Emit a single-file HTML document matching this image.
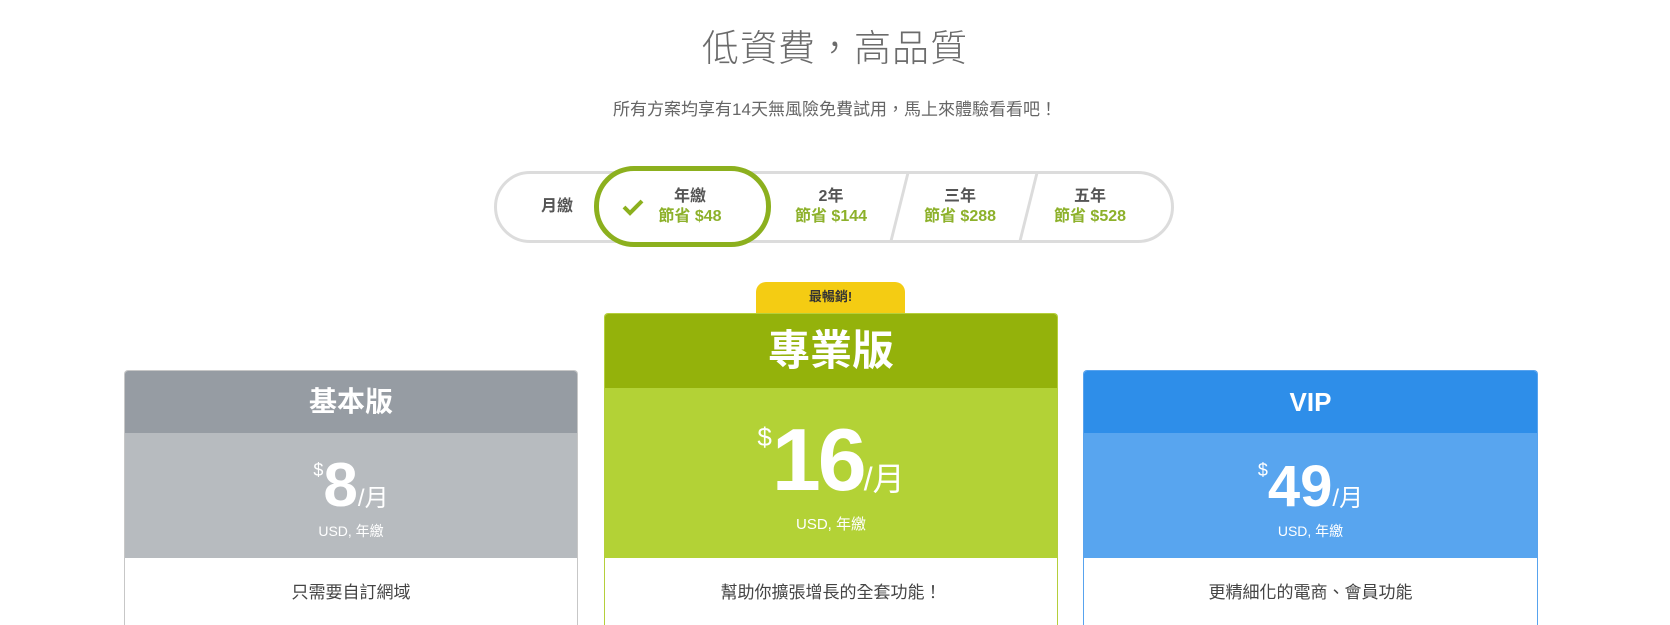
<!DOCTYPE html>
<html><head><meta charset="utf-8"><style>
*{margin:0;padding:0;box-sizing:border-box}
html{width:1670px;height:625px;overflow:hidden}
body{width:1670px;height:625px;overflow:hidden;background:#fff;font-family:"Liberation Sans","Noto Sans CJK TC",sans-serif;position:relative;color:#555}
.abs{position:absolute}
.c{text-align:center}
.title{left:0;width:1670px;top:26px;font-size:37px;line-height:46px;color:#6b6b6b;font-weight:300;letter-spacing:1px}
.sub{left:0;width:1670px;top:98px;font-size:17px;line-height:24px;color:#666}
.toggle{left:494px;top:171px;width:680px;height:72px;border:3px solid #dcdcdc;border-radius:36px}
.sel{left:594px;top:166px;width:177px;height:81px;border:5px solid #8cb01e;border-radius:40px;background:#fff}
.lab{font-size:16px;line-height:20px;font-weight:bold;color:#555;width:120px}
.sav{color:#8db12b}
.div{width:3px;height:66px;background:#dcdcdc;transform:skewX(-14deg);top:174px}
.card{border:1px solid #c7c7c7;border-bottom:none;border-radius:4px 4px 0 0;overflow:hidden;color:#fff}
.hd{text-align:center;font-weight:bold}
.pr{text-align:center;position:relative}
.num{font-weight:bold}
.desc{background:#fff;color:#444;font-size:17px;text-align:center}
</style></head><body>
<div class="abs c title">低資費，高品質</div>
<div class="abs c sub">所有方案均享有14天無風險免費試用，馬上來體驗看看吧！</div>

<div class="abs toggle"></div>
<div class="abs div" style="left:898px"></div>
<div class="abs div" style="left:1027px"></div>
<div class="abs sel"></div>
<div class="abs lab c" style="left:497px;top:197px">月繳</div>
<svg class="abs" style="left:622px;top:198px" width="22" height="18" viewBox="0 0 22 18"><path d="M2 9 L8 15 L20 3" fill="none" stroke="#8cb01e" stroke-width="4"/></svg>
<div class="abs lab c" style="left:630px;top:187px">年繳<br><span class="sav">節省 $48</span></div>
<div class="abs lab c" style="left:771px;top:187px">2年<br><span class="sav">節省 $144</span></div>
<div class="abs lab c" style="left:900px;top:187px">三年<br><span class="sav">節省 $288</span></div>
<div class="abs lab c" style="left:1030px;top:187px">五年<br><span class="sav">節省 $528</span></div>

<!-- basic -->
<div class="abs card" style="left:124px;top:370px;width:454px;height:255px">
 <div class="hd" style="background:#969ca3;height:62px;font-size:28px;line-height:62px">基本版</div>
 <div class="pr" style="background:#b7bbbf;height:125px">
  <div class="abs" style="left:0;width:452px;top:2px;text-align:center;line-height:70px"><sup style="font-size:18px;vertical-align:30px">$</sup><span class="num" style="font-size:62px">8</span><span style="font-size:24px">/月</span></div>
  <div class="abs" style="left:0;width:452px;top:88px;text-align:center;font-size:14px">USD, 年繳</div>
 </div>
 <div class="desc" style="padding-top:20px">只需要自訂網域</div>
</div>

<!-- pro -->
<div class="abs" style="left:756px;top:282px;width:149px;height:34px;background:#f4cc13;border-radius:10px 10px 0 0;text-align:center;font-size:13px;font-weight:bold;color:#333;line-height:30px">最暢銷!</div>
<div class="abs card" style="left:604px;top:313px;width:454px;height:312px;border-color:#b5cf3b">
 <div class="hd" style="background:#94b20b;height:74px;font-size:42px;line-height:74px">專業版</div>
 <div class="pr" style="background:#b3d236;height:170px">
  <div class="abs" style="left:0;width:452px;top:4px;text-align:center;line-height:90px"><sup style="font-size:26px;vertical-align:44px">$</sup><span class="num" style="font-size:88px;letter-spacing:-3px">16</span><span style="font-size:32px">/月</span></div>
  <div class="abs" style="left:0;width:452px;top:125px;text-align:center;font-size:15px">USD, 年繳</div>
 </div>
 <div class="desc" style="padding-top:20px">幫助你擴張增長的全套功能！</div>
</div>

<!-- vip -->
<div class="abs card" style="left:1083px;top:370px;width:455px;height:255px;border-color:#58a3ee">
 <div class="hd" style="background:#2e8ee9;height:62px;font-size:26px;line-height:62px">VIP</div>
 <div class="pr" style="background:#58a5ef;height:125px">
  <div class="abs" style="left:0;width:453px;top:2px;text-align:center;line-height:70px"><sup style="font-size:18px;vertical-align:30px">$</sup><span class="num" style="font-size:58px">49</span><span style="font-size:24px">/月</span></div>
  <div class="abs" style="left:0;width:453px;top:88px;text-align:center;font-size:14px">USD, 年繳</div>
 </div>
 <div class="desc" style="padding-top:20px">更精細化的電商、會員功能</div>
</div>
</body></html>
